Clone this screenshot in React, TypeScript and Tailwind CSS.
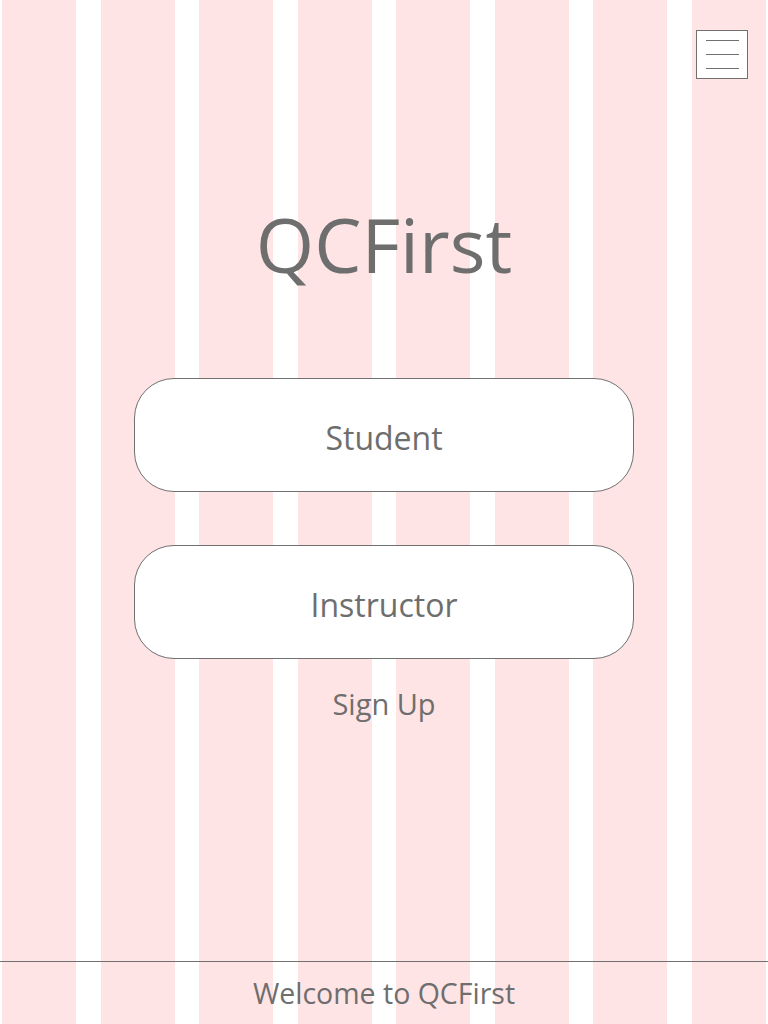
const font = { fontFamily: '"Open Sans", "Noto Sans", sans-serif' };

function Stripes() {
    const cols = [0, 1, 2, 3, 4, 5, 6, 7];
    return (
        <div className="absolute inset-0 flex gap-[24.5px] px-[2px] pointer-events-none">
            {cols.map((c) => (
                <div key={c} className="flex-1 bg-[#ffe4e5]" />
            ))}
        </div>
    );
}

export default function App() {
    return (
        <div className="relative h-[1024px] w-full overflow-hidden bg-white text-[#6e6e6e]" style={font}>
            <Stripes />
            <div className="relative flex h-full flex-col">
                <div className="flex justify-end pt-[30px] pr-[20px]">
                    <button className="flex h-[49px] w-[52px] flex-col items-center justify-center gap-[13px] border border-[#707070] bg-white">
                        <span className="block h-px w-[33px] bg-[#707070]" />
                        <span className="block h-px w-[33px] bg-[#707070]" />
                        <span className="block h-px w-[33px] bg-[#707070]" />
                    </button>
                </div>

                <h1 className="mt-[115px] text-center text-[75px] leading-[100px]">QCFirst</h1>

                <div className="mt-[84px] flex flex-col items-center gap-[53px]">
                    <button className="h-[114px] w-[500px] rounded-[40px] border border-[#707070] bg-white pt-[6px] text-[32px]">
                        Student
                    </button>
                    <button className="h-[114px] w-[500px] rounded-[40px] border border-[#707070] bg-white pt-[6px] text-[32px]">
                        Instructor
                    </button>
                </div>

                <a className="mt-[25px] self-center text-[29px] leading-[40px]">Sign Up</a>

                <footer className="mt-auto flex h-[63px] items-center justify-center border-t border-[#707070]">
                    <span className="text-[28.5px]">Welcome to QCFirst</span>
                </footer>
            </div>
        </div>
    );
}
